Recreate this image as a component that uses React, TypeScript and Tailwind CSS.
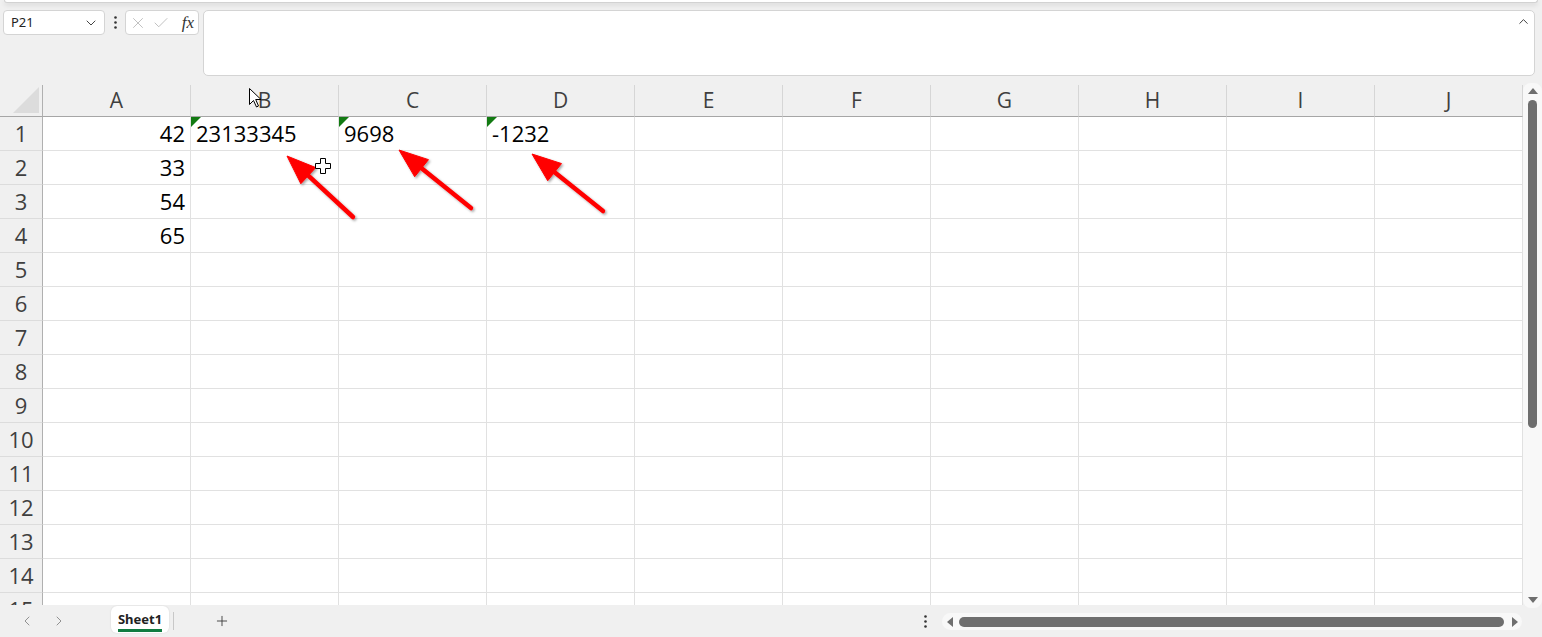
import { ChevronDown, ChevronUp, X, Check, ChevronLeft, ChevronRight, Plus } from "lucide-react";

const COLS = ["A", "B", "C", "D", "E", "F", "G", "H", "I", "J"];
const ROWS = Array.from({ length: 15 }, (_, i) => i + 1);

type CellData = { v: string; align?: "left" | "right"; flag?: boolean };

const DATA: Record<string, CellData> = {
  A1: { v: "42", align: "right" },
  A2: { v: "33", align: "right" },
  A3: { v: "54", align: "right" },
  A4: { v: "65", align: "right" },
  B1: { v: "23133345", flag: true },
  C1: { v: "9698", flag: true },
  D1: { v: "-1232", flag: true },
};

// annotation arrows: [tailX, tailY, tipX, tipY]
const ARROWS: [number, number, number, number][] = [
  [353, 217, 287, 156],
  [471, 208, 399, 150],
  [603, 211, 532, 154],
];

const arrowParts = ([sx, sy, tx, ty]: [number, number, number, number]) => {
  const len = Math.hypot(tx - sx, ty - sy);
  const dx = (tx - sx) / len;
  const dy = (ty - sy) / len;
  const headLen = 29;
  const half = 11;
  const bx = tx - dx * headLen;
  const by = ty - dy * headLen;
  const pts = `${tx},${ty} ${bx - dy * half},${by + dx * half} ${bx + dy * half},${by - dx * half}`;
  return { line: { x1: sx, y1: sy, x2: bx + dx * 4, y2: by + dy * 4 }, pts };
};

const Triangle = ({ dir }: { dir: "up" | "down" | "left" | "right" }) => {
  const pts = {
    up: "0,6 5,0 10,6",
    down: "0,0 10,0 5,6",
    left: "6,0 6,10 0,5",
    right: "0,0 0,10 6,5",
  }[dir];
  const vert = dir === "up" || dir === "down";
  return (
    <svg width={vert ? 10 : 6} height={vert ? 6 : 10} viewBox={vert ? "0 0 10 6" : "0 0 6 10"}>
      <polygon points={pts} fill="#6e6e6e" />
    </svg>
  );
};

const Dots = () => (
  <svg width="3" height="13" viewBox="0 0 3 13">
    <circle cx="1.5" cy="1.5" r="1.3" fill="#333" />
    <circle cx="1.5" cy="6.5" r="1.3" fill="#333" />
    <circle cx="1.5" cy="11.5" r="1.3" fill="#333" />
  </svg>
);

const Cell = ({ id }: { id: string }) => {
  const d = DATA[id];
  return (
    <div className="relative h-[34px] border-r border-b border-[#e1e1e1] bg-white flex items-center px-[5px] overflow-visible">
      {d?.flag && (
        <svg className="absolute left-0 top-0" width="10" height="10" viewBox="0 0 10 10">
          <polygon points="0,0 10,0 0,10" fill="#127a12" />
        </svg>
      )}
      {d && (
        <span className={`w-full whitespace-nowrap text-[22px] text-black ${d.align === "right" ? "text-right" : "text-left"}`}>
          {d.v}
        </span>
      )}
    </div>
  );
};

export default function App() {
  return (
    <div className="relative w-[1542px] h-[637px] overflow-hidden bg-[#f0f0f0] flex flex-col font-['Noto_Sans',sans-serif]">
      {/* ribbon edge */}
      <div className="h-[10px] shrink-0">
        <div className="mx-[4px] h-[3px] bg-white rounded-b-[4px] border border-t-0 border-[#d2d2d2] shadow-[0_2px_5px_rgba(0,0,0,0.12)]" />
      </div>

      {/* formula row */}
      <div className="flex items-start h-[66px] shrink-0 pl-[3px] pr-[7px]">
        <div className="w-[102px] h-[25px] bg-white border border-[#d4d4d4] rounded-[4px] flex items-center justify-between pl-[7px] pr-[5px]">
          <span className="text-[13px] text-[#222]">P21</span>
          <ChevronDown size={16} strokeWidth={1.5} color="#444" />
        </div>
        <div className="w-[20px] h-[25px] flex items-center justify-center">
          <Dots />
        </div>
        <div className="w-[74px] h-[25px] bg-white border border-[#d4d4d4] rounded-[4px] flex items-center pl-[3px] pr-[4px] gap-[5px]">
          <X size={18} strokeWidth={1.1} color="#b4b4b4" />
          <Check size={18} strokeWidth={1.1} color="#b4b4b4" />
          <span className="ml-auto text-[17px] italic text-[#333] font-['Liberation_Serif',serif] leading-none">fx</span>
        </div>
        <div className="ml-[4px] flex-1 h-[66px] bg-white border border-[#d4d4d4] rounded-[5px] flex justify-end pt-[3px] pr-[3px]">
          <ChevronUp size={15} strokeWidth={1.5} color="#333" />
        </div>
      </div>

      {/* sheet */}
      <div className="mt-[7px] h-[522px] shrink-0 flex">
        <div className="w-[1523px] pt-[2px] overflow-hidden font-['Open_Sans',sans-serif]">
          <div className="grid grid-cols-[43px_repeat(10,148px)]">
            <div className="h-[32px] border-r border-b border-[#b0b0b0] border-b-[#a6a6a6] flex items-end justify-end pr-[3px] pb-[3px]">
              <svg width="26" height="26" viewBox="0 0 26 26">
                <polygon points="26,0 26,26 0,26" fill="#dcdcdc" />
              </svg>
            </div>
            {COLS.map((c) => (
              <div
                key={c}
                className="h-[32px] border-r border-b border-r-[#d6d6d6] border-b-[#a6a6a6] flex items-center justify-center text-[21px] text-[#3f3f3f]"
              >
                {c}
              </div>
            ))}
            {ROWS.map((r) => (
              <div key={r} className="contents">
                <div className="h-[34px] border-r border-b border-r-[#b0b0b0] border-b-[#dcdcdc] flex items-center justify-center text-[22px] text-[#3f3f3f]">
                  {r}
                </div>
                {COLS.map((c) => (
                  <Cell key={c + r} id={c + r} />
                ))}
              </div>
            ))}
          </div>
        </div>
        {/* vertical scrollbar */}
        <div className="w-[19px] h-[525px] bg-[#f8f8f8] rounded-[8px] flex flex-col items-center pt-[5px]">
          <Triangle dir="up" />
          <div className="mt-[6px] w-[9px] h-[328px] bg-[#6e6e6e] rounded-full" />
          <div className="mt-auto mb-[5px]">
            <Triangle dir="down" />
          </div>
        </div>
      </div>

      {/* tab bar */}
      <div className="h-[32px] shrink-0 flex items-start">
        <div className="ml-[11px] w-[32px] h-[32px] flex items-center justify-center">
          <ChevronLeft size={16} strokeWidth={1.4} color="#8a8a8a" />
        </div>
        <div className="w-[32px] h-[32px] flex items-center justify-center">
          <ChevronRight size={16} strokeWidth={1.4} color="#8a8a8a" />
        </div>
        <div className="ml-[36px] mt-[1px] w-[58px] h-[27px] bg-white rounded-[6px] shadow-[0_0_2px_rgba(0,0,0,0.12)] flex flex-col items-center pt-[5px]">
          <span className="text-[13px] font-bold leading-[16px] text-[#222] border-b-[3px] border-[#107c41] pb-[2px]">Sheet1</span>
        </div>
        <div className="ml-[4px] mt-[7px] w-px h-[18px] bg-[#c8c8c8]" />
        <div className="ml-[40px] h-[32px] flex items-center">
          <Plus size={16} strokeWidth={1.3} color="#333" />
        </div>
        <div className="flex-1" />
        <div className="w-[16px] h-[32px] flex items-center justify-center">
          <Dots />
        </div>
        <div className="ml-[9px] mr-[20px] mt-[8px] w-[580px] h-[17px] bg-[#f8f8f8] rounded-full flex items-center pl-[5px] pr-[4px]">
          <Triangle dir="left" />
          <div className="ml-[6px] w-[545px] h-[10px] bg-[#6e6e6e] rounded-full" />
          <div className="ml-auto">
            <Triangle dir="right" />
          </div>
        </div>
      </div>

      {/* annotations and cursors */}
      <svg className="absolute left-0 top-0 pointer-events-none" width="1542" height="637" viewBox="0 0 1542 637">
        <defs>
          <filter id="sh" x="-20%" y="-20%" width="140%" height="140%">
            <feDropShadow dx="1.5" dy="1.5" stdDeviation="1.2" floodColor="#000" floodOpacity="0.35" />
          </filter>
        </defs>
        {ARROWS.map((a, i) => {
          const p = arrowParts(a);
          return (
            <g key={i} filter="url(#sh)">
              <line {...p.line} stroke="#ff0000" strokeWidth="4.5" strokeLinecap="round" />
              <polygon points={p.pts} fill="#ff0000" strokeLinejoin="round" stroke="#ff0000" strokeWidth="1" />
            </g>
          );
        })}
        <path
          d="M249.5 88.5 L249.5 104.5 L253.5 100.5 L256.5 107 L258.5 106 L255.7 99.5 L261 99.5 Z"
          fill="#fff"
          stroke="#000"
          strokeWidth="1"
        />
        <path
          d="M320.5 158.5 h5 v5 h5 v5 h-5 v5 h-5 v-5 h-5 v-5 h5 Z"
          fill="#fff"
          stroke="#000"
          strokeWidth="1"
        />
      </svg>
    </div>
  );
}
